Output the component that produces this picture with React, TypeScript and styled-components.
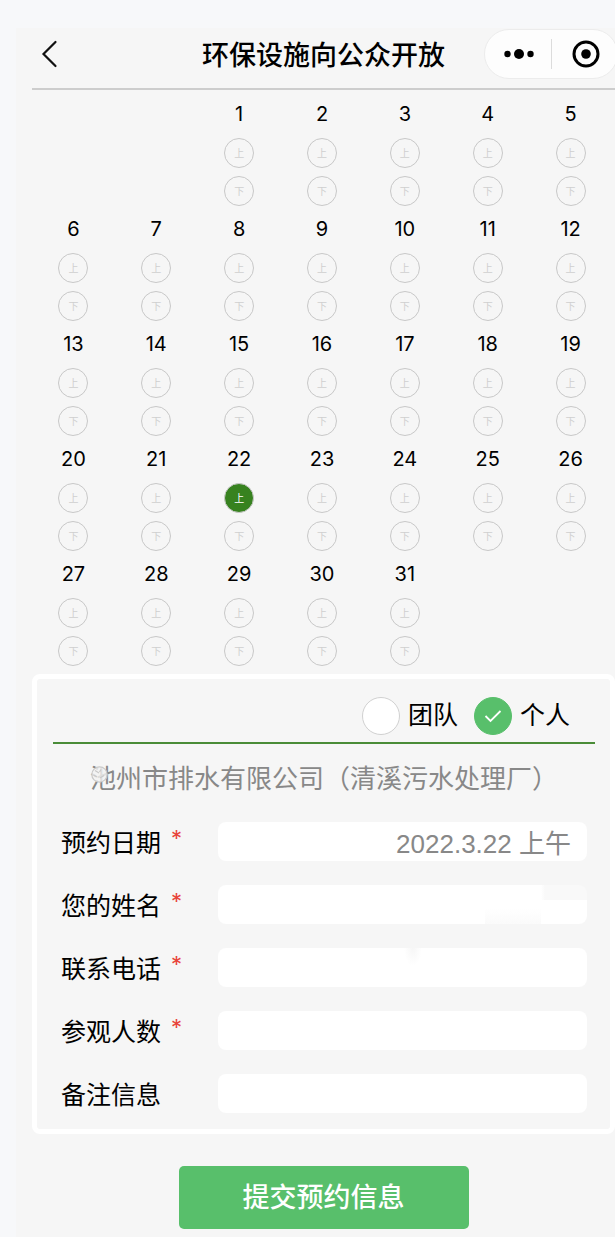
import React, { useState } from "react";
import styled, { createGlobalStyle, css } from "styled-components";

const cjk = `"Noto Sans CJK SC", sans-serif`;

const Global = createGlobalStyle`
  * { box-sizing: border-box; }
  body {
    margin: 0;
    background: #f7f8fa;
    color: #000;
    font-family: Inter, ${cjk};
  }
  button, input { font: inherit; color: inherit; margin: 0; }
  button { padding: 0; border: 0; background: none; cursor: pointer; }
`;

const Page = styled.div`
  padding: 28px 0 0 16px;
  overflow: hidden;
`;

const Screen = styled.main`
  background: #f6f6f6;
  padding: 0 0 8px 16px;
`;

const Header = styled.header`
  display: grid;
  grid-template-columns: 1fr auto 1fr;
  align-items: center;
  height: 62px;
  padding-bottom: 8px;
  border-bottom: 2px solid #cdcdcd;
`;

const BackButton = styled.button`
  display: flex;
  justify-self: start;
  padding: 8px;
`;

const Title = styled.h1`
  margin: 0;
  font-family: ${cjk};
  font-size: 27px;
  line-height: 40px;
  font-weight: 500;
`;

const Capsule = styled.div`
  display: grid;
  grid-template-columns: 1fr 1px 1fr;
  align-items: center;
  justify-self: end;
  width: 134px;
  height: 50px;
  margin-right: -3px;
  border: 1px solid #ececec;
  border-radius: 25px;
  background: #fdfdfd;
`;

const CapsuleButton = styled.button`
  display: flex;
  align-items: center;
  justify-content: center;
  padding-left: 3px;
`;

const CapsuleDivider = styled.span`
  height: 30px;
  background: #dcdcdc;
`;

const Calendar = styled.section`
  display: grid;
  grid-template-columns: repeat(7, 1fr);
  padding: 1px 3px 0 0;
`;

const Day = styled.div<{ $start?: number }>`
  display: flex;
  flex-direction: column;
  align-items: center;
  gap: 8px;
  ${(p) => p.$start && css`grid-column-start: ${p.$start};`}
`;

const DayNumber = styled.span`
  font-size: 20px;
  line-height: 47px;
  margin-bottom: -8px;
`;

const Slot = styled.button<{ $selected: boolean }>`
  width: 30px;
  height: 30px;
  border: 1px solid #c8c8c8;
  border-radius: 50%;
  font-family: ${cjk};
  font-size: 10px;
  line-height: 28px;
  color: ${(p) => (p.$selected ? "#fff" : "#cfcfcf")};
  background: ${(p) => (p.$selected ? "#37821f" : "transparent")};
`;

const Form = styled.form`
  padding-top: 8px;
`;

const Card = styled.div`
  border: 5px solid #fff;
  border-radius: 8px;
  padding: 0 15px 16px 16px;
`;

const TypeRow = styled.div`
  display: flex;
  justify-content: flex-end;
  gap: 16px;
  padding: 18px 25px 7px;
  border-bottom: 2px solid #4a8c38;
`;

const TypeOption = styled.label`
  display: flex;
  align-items: flex-start;
  gap: 8px;
  font-size: 25px;
  line-height: 36px;
`;

const RadioBox = styled.span`
  display: grid;
  place-items: center;
  > * { grid-area: 1 / 1; }
  svg { pointer-events: none; }
`;

const Radio = styled.input`
  appearance: none;
  width: 38px;
  height: 38px;
  border: 1px solid #d1d1d1;
  border-radius: 50%;
  background: #fff;
  &:checked { background: #58bf6b; border-color: #58bf6b; }
`;

const Facility = styled.p`
  position: relative;
  margin: 0;
  padding: 16px 0 24px;
  text-align: center;
  font-size: 26px;
  line-height: 38px;
  color: #888;
`;

const Mark = styled.svg`
  position: absolute;
  left: 38px;
  top: 22px;
`;

const Fields = styled.div`
  display: grid;
  gap: 24px;
  padding: 0 8px;
`;

const Field = styled.div`
  display: grid;
  grid-template-columns: 157px 1fr;
  align-items: center;
`;

const Label = styled.label`
  display: flex;
  gap: 10px;
  font-family: ${cjk};
  font-size: 25px;
  line-height: 39px;
`;

const Required = styled.span`
  font-family: Inter, sans-serif;
  font-size: 22px;
  line-height: 32px;
  color: #e8433a;
`;

const TextInput = styled.input<{ $smudge?: string }>`
  width: 100%;
  min-width: 0;
  height: 39px;
  padding: 0 16px;
  border: 0;
  border-radius: 8px;
  outline: 0;
  background: ${(p) => (p.$smudge ? p.$smudge + ", " : "")}linear-gradient(#fff, #fff);
  text-align: right;
  font-family: "Liberation Sans", ${cjk};
  font-size: 26px;
  color: #888;
`;

const Submit = styled.button`
  display: block;
  width: 290px;
  height: 63px;
  margin: 32px auto 0;
  border-radius: 5px;
  background: #58bf6b;
  color: #fff;
  font-size: 27px;
  font-weight: 500;
  line-height: 60px;
`;

const days = Array.from({ length: 31 }, (_, i) => i + 1);

const nameShade =
  "linear-gradient(to right, transparent, #f9f9f9 4px) right top / 46px 15px no-repeat, linear-gradient(to bottom, transparent, #fafafa) right 46px bottom / 56px 16px no-repeat";
const phoneShade =
  "radial-gradient(ellipse at top, #f6f6f6, transparent 70%) right 165px top / 18px 18px no-repeat";

const fields = [
  { id: "date", label: "预约日期", required: true, value: "2022.3.22 上午" },
  { id: "name", label: "您的姓名", required: true, shade: nameShade },
  { id: "phone", label: "联系电话", required: true, shade: phoneShade },
  { id: "visitors", label: "参观人数", required: true },
  { id: "remark", label: "备注信息", required: false },
];

export default function App() {
  const [slot, setSlot] = useState("22上");
  const [type, setType] = useState("个人");
  return (
    <Page>
      <Global />
      <Screen>
        <Header>
          <BackButton aria-label="返回">
            <svg width="18" height="28" viewBox="0 0 18 28" fill="none" stroke="#111" strokeWidth="2.2" strokeLinecap="round">
              <path d="M15.500 2 3.500 14 15.500 26" />
            </svg>
          </BackButton>
          <Title>环保设施向公众开放</Title>
          <Capsule>
            <CapsuleButton aria-label="更多">
              <svg width="32" height="12" viewBox="0 0 32 12">
                <circle cx="4.500" cy="6" r="3.200" />
                <circle cx="16" cy="6" r="5" />
                <circle cx="27.500" cy="6" r="3.200" />
              </svg>
            </CapsuleButton>
            <CapsuleDivider />
            <CapsuleButton aria-label="关闭">
              <svg width="28" height="28" viewBox="0 0 28 28">
                <circle cx="14" cy="14" r="12" fill="none" stroke="#000" strokeWidth="3" />
                <circle cx="14" cy="14" r="4.800" />
              </svg>
            </CapsuleButton>
          </Capsule>
        </Header>

        <Calendar aria-label="选择日期">
          {days.map((d) => (
            <Day key={d} $start={d === 1 ? 3 : undefined}>
              <DayNumber>{d}</DayNumber>
              {["上", "下"].map((half) => (
                <Slot
                  key={half}
                  type="button"
                  $selected={slot === d + half}
                  aria-pressed={slot === d + half}
                  onClick={() => setSlot(d + half)}
                >
                  {half}
                </Slot>
              ))}
            </Day>
          ))}
        </Calendar>

        <Form onSubmit={(e) => e.preventDefault()}>
          <Card>
            <TypeRow>
              {["团队", "个人"].map((t) => (
                <TypeOption key={t}>
                  <RadioBox>
                    <Radio type="radio" name="type" checked={type === t} onChange={() => setType(t)} />
                    {type === t && (
                      <svg width="18" height="14" viewBox="0 0 18 14" fill="none" stroke="#fff" strokeWidth="1.800">
                        <path d="M1.500 7 6.500 12 16.500 2" />
                      </svg>
                    )}
                  </RadioBox>
                  {t}
                </TypeOption>
              ))}
            </TypeRow>
            <Facility>
              池州市排水有限公司（清溪污水处理厂）
              <Mark width="17" height="17" viewBox="0 0 17 17" fill="none" stroke="#c9c9c9" strokeWidth="1.200">
                <circle cx="8.500" cy="8.500" r="7.700" fill="#f3f3f3" fillOpacity="0.800" />
                <path d="M4 4.500 8 7M2.500 9 6 11M10 3.500 8.500 6M9 12 13 9.500" />
              </Mark>
            </Facility>
            <Fields>
              {fields.map((f) => (
                <Field key={f.id}>
                  <Label htmlFor={f.id}>
                    {f.label}
                    {f.required && <Required>*</Required>}
                  </Label>
                  <TextInput id={f.id} defaultValue={f.value} $smudge={f.shade} />
                </Field>
              ))}
            </Fields>
          </Card>
          <Submit type="submit">提交预约信息</Submit>
        </Form>
      </Screen>
    </Page>
  );
}
